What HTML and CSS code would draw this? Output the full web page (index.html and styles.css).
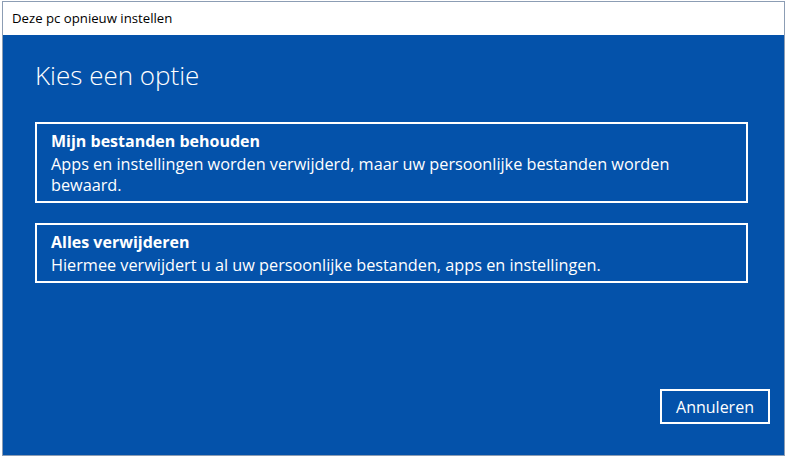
FILE: index.html
```html
<!DOCTYPE html>
<html lang="nl">
<head>
<meta charset="utf-8">
<title>Deze pc opnieuw instellen</title>
<link rel="stylesheet" href="styles.css">
</head>
<body>
<div class="window">
  <div class="titlebar">Deze pc opnieuw instellen</div>
  <div class="panel">
    <div class="content">
      <h1 class="heading">Kies een optie</h1>
      <div class="option option-keep">
        <div class="option-title">Mijn bestanden behouden</div>
        <div class="option-desc">Apps en instellingen worden verwijderd, maar uw persoonlijke bestanden worden<br>bewaard.</div>
      </div>
      <div class="option option-remove">
        <div class="option-title">Alles verwijderen</div>
        <div class="option-desc">Hiermee verwijdert u al uw persoonlijke bestanden, apps en instellingen.</div>
      </div>
    </div>
    <div class="footer">
      <button class="btn-cancel">Annuleren</button>
    </div>
  </div>
</div>
</body>
</html>
```

FILE: styles.css
```css
html, body {
  margin: 0;
  padding: 0;
  background: #ffffff;
}
body {
  width: 790px;
  height: 459px;
  overflow: hidden;
  font-family: "Open Sans", "Noto Sans", "DejaVu Sans", sans-serif;
}
.window {
  margin: 1px 3px 0 2px;
  width: 783px;
  height: 455px;
  border: 1px solid #8c9db4;
  box-sizing: border-box;
  display: flex;
  flex-direction: column;
  background: #fff;
}
.titlebar {
  height: 33px;
  flex: none;
  box-sizing: border-box;
  padding: 6px 0 0 9px;
  font-size: 13.2px;
  line-height: 20px;
  color: #000;
}
.panel {
  flex: 1;
  background: #0452aa;
  color: #fff;
  display: flex;
  flex-direction: column;
}
.content {
  padding: 22px 36px 0 32px;
}
.heading {
  margin: 0 0 29px 0;
  font-weight: 300;
  font-size: 26px;
  line-height: 36px;
}
.option {
  border: 2px solid #ffffff;
  padding: 6px 14px 5px 14px;
  margin-bottom: 20px;
}
.option-title {
  font-weight: 700;
  font-size: 16px;
  line-height: 22px;
}
.option-desc {
  font-size: 16.25px;
  line-height: 21px;
  margin-top: 2px;
}
.footer {
  margin-top: auto;
  display: flex;
  justify-content: flex-end;
  padding: 0 14px 31px 0;
}
.btn-cancel {
  width: 110px;
  height: 35px;
  background: transparent;
  border: 2px solid #ffffff;
  color: #fff;
  font-family: inherit;
  font-size: 16px;
  padding: 0;
}
```
